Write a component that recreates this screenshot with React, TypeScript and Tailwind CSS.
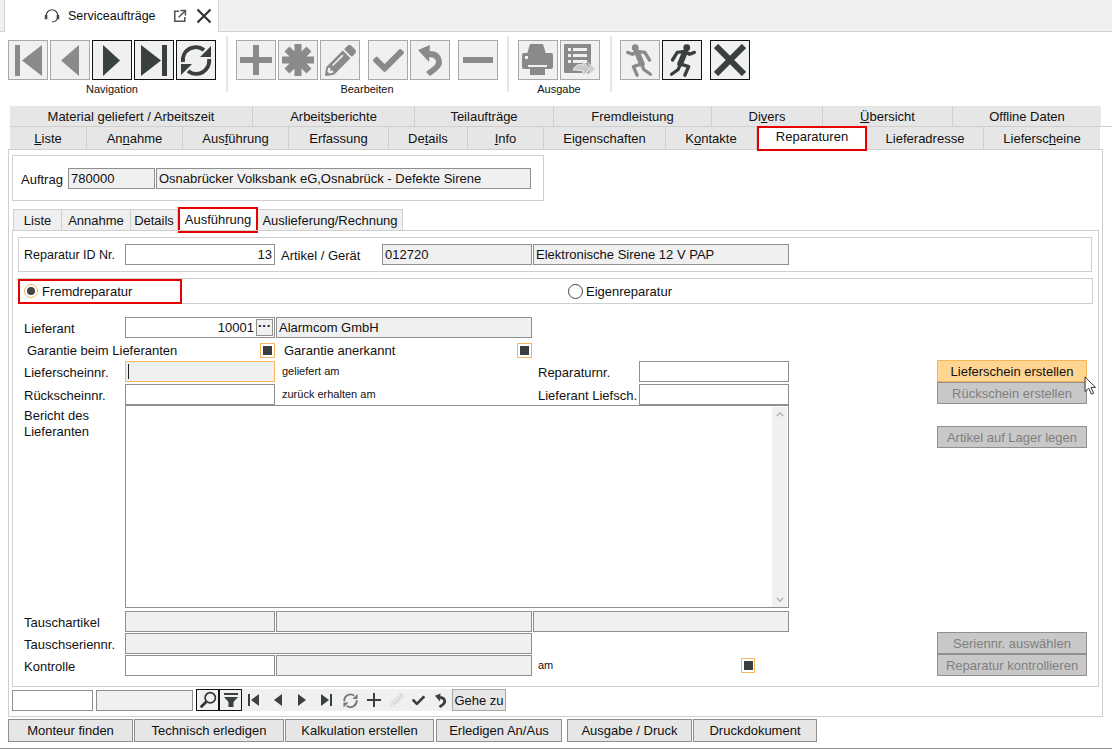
import type { ReactNode } from "react"
import { FaCheck, FaPencilAlt } from "react-icons/fa"

const DARK = "#3a3f3f"
const GREY = "#8a8a8a"

function First({ c }: { c: string }) {
  return (
    <svg viewBox="0 0 32 32" className="w-[32px] h-[32px]" fill={c}>
      <rect x="3" y="1" width="5" height="31" />
      <path d="M10 16.5 L30 1 V32 Z" />
    </svg>
  )
}
function Prev({ c }: { c: string }) {
  return (
    <svg viewBox="0 0 32 32" className="w-[32px] h-[32px]" fill={c}>
      <path d="M7 16.5 L25 1 V32 Z" />
    </svg>
  )
}
function Next({ c }: { c: string }) {
  return (
    <svg viewBox="0 0 32 32" className="w-[32px] h-[32px]" fill={c}>
      <path d="M24 16.5 L7 1 V32 Z" />
    </svg>
  )
}
function Last({ c }: { c: string }) {
  return (
    <svg viewBox="0 0 32 32" className="w-[32px] h-[32px]" fill={c}>
      <path d="M23 16.5 L3 1 V32 Z" />
      <rect x="24" y="1" width="5" height="31" />
    </svg>
  )
}
function Plus({ c }: { c: string }) {
  return (
    <svg viewBox="0 0 32 32" className="w-[32px] h-[32px]" fill={c}>
      <path d="M13 1 H19 V13 H32 V19 H19 V31 H13 V19 H0 V13 H13 Z" />
    </svg>
  )
}
function Star({ c }: { c: string }) {
  return (
    <svg viewBox="0 0 32 32" className="w-[32px] h-[32px]" fill="none" stroke={c} strokeWidth="7">
      <path d="M16 0 V32 M0 16 H32 M5 5 L27 27 M27 5 L5 27" />
    </svg>
  )
}
function Minus({ c }: { c: string }) {
  return (
    <svg viewBox="0 0 32 32" className="w-[32px] h-[32px]" fill={c}>
      <rect x="1" y="13" width="30" height="6" />
    </svg>
  )
}
function Undo({ c, size = "w-[32px] h-[32px]" }: { c: string; size?: string }) {
  return (
    <svg viewBox="0 0 32 32" className={size} fill={c}>
      <path d="M4 6 L16 1 L15 18 Z" />
      <path d="M14 7 C24 6 28 12 28 19 C28 23 22 28 16 32 L12 28 C17 24 22 21 22 18 C22 14 18 13 14 13 Z" />
    </svg>
  )
}
function Cross({ c }: { c: string }) {
  return (
    <svg viewBox="0 0 32 32" className="w-[32px] h-[32px]" fill="none" stroke={c} strokeWidth="6">
      <path d="M2 2 L30 30 M30 2 L2 30" />
    </svg>
  )
}
function Refresh({ c, size = "w-[32px] h-[32px]" }: { c: string; size?: string }) {
  return (
    <svg viewBox="0 0 32 32" className={size}>
      <g fill="none" stroke={c} strokeWidth="4">
        <path d="M3 18 A13 13 0 0 1 24 6" />
        <path d="M29 15 A13 13 0 0 1 8 27" />
      </g>
      <path d="M20 13 L31 13 L31 2 Z M12 20 L1 20 L1 31 Z" fill={c} />
    </svg>
  )
}
function Printer({ c }: { c: string }) {
  return (
    <svg viewBox="0 0 32 32" className="w-[32px] h-[32px]" fill={c}>
      <path d="M8 0 H21 L24 10 H5 Z" />
      <rect x="0" y="9" width="31" height="16" rx="2" />
      <rect x="8" y="25" width="15" height="6" />
      <rect x="3" y="12" width="3" height="3" fill="#f0f0f0" />
      <rect x="6" y="21" width="19" height="2" fill="#f0f0f0" />
    </svg>
  )
}
function Runner({ c, flip }: { c: string; flip?: boolean }) {
  return (
    <svg viewBox="0 0 40 40" className={`w-[38px] h-[38px] ${flip ? "-scale-x-100" : ""}`} fill="none" stroke={c} strokeWidth="3.5" strokeLinejoin="round" strokeLinecap="round">
      <circle cx="25" cy="7" r="3.6" fill={c} stroke="none" />
      <path d="M23 12 L18 24" strokeWidth="6" />
      <path d="M23 11 L28 14 L33 12" />
      <path d="M23 11 L15 12 L10 20" />
      <path d="M18 24 L27 27 L23 36" />
      <path d="M18 25 L16 30 L9 35" />
    </svg>
  )
}
function ReportSend() {
  return (
    <svg viewBox="0 0 34 34" className="w-[34px] h-[34px]">
      <rect x="1" y="1" width="27" height="29" rx="1" fill={GREY} />
      <g fill="#f0f0f0">
        <rect x="5" y="5" width="3" height="3" />
        <rect x="10" y="5" width="14" height="3" />
        <rect x="5" y="11" width="3" height="3" />
        <rect x="10" y="11" width="14" height="3" />
        <rect x="5" y="17" width="3" height="3" />
        <rect x="10" y="17" width="14" height="3" />
      </g>
      <path d="M10 27 C13 21 17 21 20 22 V18 L27 26 L20 33 V28 C16 27 13 27 10 27 Z" fill="#c8c8c8" stroke="#f0f0f0" />
      <path d="M24 18 L32 26 L24 33 L27 26 Z" fill="#cfcfcf" />
    </svg>
  )
}

function ToolBtn({ on, children, className }: { on?: boolean; children: ReactNode; className?: string }) {
  return (
    <div
      className={`w-[40px] h-[40px] bg-[#f0f0f0] flex items-center justify-center border ${on ? "border-[#111]" : "border-[#a8a8a8]"} ${className ?? ""}`}
    >
      {children}
    </div>
  )
}

function ToolGroup({ label, className, children }: { label: string; className: string; children: ReactNode }) {
  return (
    <div className={`flex flex-col items-start ${className}`}>
      <div className="flex gap-[2px]">{children}</div>
      <div className="w-full text-center text-[11px] leading-[12px] mt-[3px] text-[#111]">{label}</div>
    </div>
  )
}

const Sep = ({ className }: { className: string }) => <div className={`w-[2px] h-[56px] -mt-[4px] bg-[#e6e6e6] ${className}`} />

type Tab = { t: ReactNode; w: string; active?: boolean }

const u = (s: string) => <span className="underline underline-offset-1">{s}</span>

const topTabs: Tab[] = [
  { t: "Material geliefert / Arbeitszeit", w: "w-[243px]" },
  { t: <>Arbeit{u("s")}berichte</>, w: "w-[162px]" },
  { t: "Teilaufträge", w: "w-[139px]" },
  { t: "Fremdleistung", w: "w-[158px]" },
  { t: <>Di{u("v")}ers</>, w: "w-[111px]" },
  { t: <>{u("Ü")}bersicht</>, w: "w-[130px]" },
  { t: "Offline Daten", w: "w-[148px]" },
]

const mainTabs: Tab[] = [
  { t: <>{u("L")}iste</>, w: "w-[77px]" },
  { t: <>An{u("n")}ahme</>, w: "w-[96px]" },
  { t: <>Aus{u("f")}ührung</>, w: "w-[106px]" },
  { t: "Erfassung", w: "w-[100px]" },
  { t: <>De{u("t")}ails</>, w: "w-[79px]" },
  { t: <>{u("I")}nfo</>, w: "w-[76px]" },
  { t: <>Ei{u("g")}enschaften</>, w: "w-[122px]" },
  { t: <>K{u("o")}ntakte</>, w: "w-[91px]" },
  { t: "Reparaturen", w: "w-[110px]", active: true },
  { t: "Lieferadresse", w: "w-[117px]" },
  { t: <>Liefersc{u("h")}eine</>, w: "w-[116px]" },
]

function TabRow({ tabs, className }: { tabs: Tab[]; className: string }) {
  return (
    <div className={`flex ml-[10px] ${className}`}>
      {tabs.map((tab, i) =>
        tab.active ? (
          <div
            key={i}
            className={`${tab.w} h-[25px] -mt-[1px] -mb-[3px] relative bg-white border-2 border-[#e60000] flex items-start pt-[1px] justify-center`}
          >
            {tab.t}
          </div>
        ) : (
          <div
            key={i}
            className={`${tab.w} flex items-center justify-center bg-[#e6e6e6] border-r border-[#cfcfcf] last:border-r-0`}
          >
            {tab.t}
          </div>
        ),
      )}
    </div>
  )
}

function Input({
  w,
  grey,
  focus,
  right,
  children,
  className,
}: {
  w: string
  grey?: boolean
  focus?: boolean
  right?: boolean
  children?: ReactNode
  className?: string
}) {
  return (
    <div
      className={`${w} h-[21px] shrink-0 border ${focus ? "border-[#f7b65c]" : "border-[#8f8f8f]"} ${grey ? "bg-[#f0f0f0]" : "bg-white"} ${right ? "justify-end" : ""} flex items-center px-[2px] whitespace-nowrap ${className ?? ""}`}
    >
      {children}
    </div>
  )
}

function Check({ small }: { small?: boolean }) {
  return (
    <div className={`${small ? "w-[14px]" : "w-[15px]"} h-[15px] shrink-0 border border-[#f7b65c] flex items-center justify-center bg-white`}>
      <div className="w-[9px] h-[9px] bg-[#3a3f3f]" />
    </div>
  )
}

function Label({ w, children, className }: { w: string; children: ReactNode; className?: string }) {
  return <div className={`${w} shrink-0 whitespace-nowrap ${className ?? ""}`}>{children}</div>
}

function SideBtn({ children, hot, className }: { children: ReactNode; hot?: boolean; className?: string }) {
  return (
    <div
      className={`w-[150px] h-[22px] flex items-center justify-center border ${hot ? "bg-[#ffd591] border-[#f7b65c] text-[#111]" : "bg-[#c8c8c8] border-[#8f8f8f] text-[#7f7f7f]"} ${className ?? ""}`}
    >
      {children}
    </div>
  )
}

function BottomBtn({ w, children, className }: { w: string; children: ReactNode; className?: string }) {
  return (
    <div className={`${w} h-[23px] flex items-center justify-center bg-[#e6e6e6] border border-[#8f8f8f] ${className ?? ""}`}>
      {children}
    </div>
  )
}

function SubTab({ w, children, active }: { w: string; children: ReactNode; active?: boolean }) {
  if (active) {
    return (
      <div className={`${w} h-[26px] -mt-[2px] -mb-[3px] relative bg-white border-2 border-[#e60000] flex items-start pt-[3px] justify-center`}>
        {children}
      </div>
    )
  }
  return <div className={`${w} flex items-center justify-center bg-[#efefef] border-t border-r border-[#d0d0d0] first:border-l whitespace-nowrap`}>{children}</div>
}

function NavIcon({ d, c = DARK }: { d: string; c?: string }) {
  return (
    <svg viewBox="0 0 16 16" className="w-[16px] h-[16px] shrink-0" fill={c}>
      <path d={d} />
    </svg>
  )
}

export default function App() {
  return (
    <div className="w-[1112px] h-[749px] relative overflow-hidden bg-white text-[13px] leading-[15px] text-[#111] font-['Liberation_Sans',Arial,sans-serif]">
      {/* Fenster-Tab */}
      <div className="h-[32px] bg-[#f0f0f0] border-b border-[#d2d2d2] flex">
        <div className="w-[215px] ml-[4px] h-[32px] bg-white border-l border-r border-[#d2d2d2] flex items-center">
          <svg viewBox="0 0 18 18" className="w-[16px] h-[16px] ml-[39px]" fill="none" stroke="#444" strokeWidth="1.3">
            <path d="M2.5 11 V8.5 A6.5 6.5 0 0 1 15.5 8.5 V11" />
            <rect x="1.5" y="8.5" width="1.6" height="3.5" fill="#444" />
            <rect x="14.9" y="8.5" width="1.6" height="3.5" fill="#444" />
            <path d="M15 12 C14 15 12 15.6 9 15.6" />
          </svg>
          <span className="ml-[8px] text-[12.5px]">Serviceaufträge</span>
          <svg viewBox="0 0 16 16" className="w-[14px] h-[14px] ml-[17px]" fill="none" stroke="#555" strokeWidth="1.8">
            <path d="M7 2.5 H2 V14 H13.5 V9" />
            <path d="M6.5 9.5 L13.5 2.5 M8.5 1.8 H14.2 V7.5" />
          </svg>
          <svg viewBox="0 0 16 16" className="w-[16px] h-[16px] ml-[9px]" fill="none" stroke="#333" strokeWidth="2.2">
            <path d="M1.5 1.5 L14.5 14.5 M14.5 1.5 L1.5 14.5" />
          </svg>
        </div>
      </div>

      {/* Werkzeugleiste */}
      <div className="flex items-start h-[74px] pt-[8px] pl-[8px]">
        <ToolGroup label="Navigation" className="w-[208px]">
          <ToolBtn><First c={GREY} /></ToolBtn>
          <ToolBtn><Prev c={GREY} /></ToolBtn>
          <ToolBtn on><Next c={DARK} /></ToolBtn>
          <ToolBtn on><Last c={DARK} /></ToolBtn>
          <ToolBtn on><Refresh c={DARK} /></ToolBtn>
        </ToolGroup>
        <Sep className="ml-[10px]" />
        <ToolGroup label="Bearbeiten" className="w-[262px] ml-[8px]">
          <ToolBtn><Plus c={GREY} /></ToolBtn>
          <ToolBtn><Star c={GREY} /></ToolBtn>
          <ToolBtn><FaPencilAlt size={31} color={GREY} /></ToolBtn>
          <ToolBtn className="ml-[6px]"><FaCheck size={31} color={GREY} /></ToolBtn>
          <ToolBtn><Undo c={GREY} /></ToolBtn>
          <ToolBtn className="ml-[6px]"><Minus c={GREY} /></ToolBtn>
        </ToolGroup>
        <Sep className="ml-[9px]" />
        <ToolGroup label="Ausgabe" className="w-[82px] ml-[9px]">
          <ToolBtn><Printer c={GREY} /></ToolBtn>
          <ToolBtn><ReportSend /></ToolBtn>
        </ToolGroup>
        <Sep className="ml-[10px]" />
        <div className="flex ml-[8px]">
          <ToolBtn><Runner c={GREY} flip /></ToolBtn>
          <ToolBtn on className="ml-[2px]"><Runner c={DARK} /></ToolBtn>
          <ToolBtn on className="ml-[8px]"><Cross c={DARK} /></ToolBtn>
        </div>
      </div>

      {/* Haupt-Reiter */}
      <TabRow tabs={topTabs} className="h-[21px] border-b border-[#cfcfcf]" />
      <TabRow tabs={mainTabs} className="h-[22px]" />

      {/* Hauptfeld */}
      <div className="ml-[8px] w-[1095px] h-[568px] border border-[#cfcfcf] pl-[3px] pt-[5px]">
        <div className="w-[532px] h-[46px] border border-[#cfcfcf] flex items-center pl-[8px]">
          <span className="w-[47px] shrink-0 pt-[2px]">Auftrag</span>
          <Input w="w-[87px]" grey>780000</Input>
          <Input w="w-[375px]" grey className="ml-[1px]">Osnabrücker Volksbank eG,Osnabrück - Defekte Sirene</Input>
        </div>

        {/* Unter-Reiter */}
        <div className="flex h-[21px] mt-[8px] ml-[1px] relative">
          <SubTab w="w-[49px]">Liste</SubTab>
          <SubTab w="w-[69px]">Annahme</SubTab>
          <SubTab w="w-[47px]">Details</SubTab>
          <SubTab w="w-[80px]" active>Ausführung</SubTab>
          <SubTab w="w-[145px]">Auslieferung/Rechnung</SubTab>
        </div>

        <div className="w-[1087px] h-[457px] border border-[#cfcfcf] pl-[5px] pt-[6px] relative">
          <div className="w-[1074px] h-[35px] border border-[#cfcfcf] flex items-center pl-[5px]">
            <Label w="w-[101px]" className="pt-[2px] text-[12.5px]">Reparatur ID Nr.</Label>
            <Input w="w-[150px]" right>13</Input>
            <Label w="w-[107px]" className="pl-[6px] pt-[2px]">Artikel / Gerät</Label>
            <Input w="w-[150px]" grey>012720</Input>
            <Input w="w-[256px]" grey className="ml-[1px]">Elektronische Sirene 12 V PAP</Input>
          </div>

          <div className="w-[1075px] h-[26px] mt-[6px] border border-[#cfcfcf] flex items-center relative">
            <div className="absolute -left-[1px] top-[0px] w-[164px] h-[25px] border-2 border-[#e60000]" />
            <div className="w-[14px] h-[14px] ml-[5px] rounded-full border border-[#f7b65c] flex items-center justify-center bg-white">
              <div className="w-[8px] h-[8px] rounded-full bg-[#444]" />
            </div>
            <span className="ml-[4px] w-[526px]">Fremdreparatur</span>
            <div className="w-[15px] h-[15px] rounded-full border border-[#444] bg-white" />
            <span className="ml-[3px]">Eigenreparatur</span>
          </div>

          <div className="flex">
            <div className="w-[772px] shrink-0 pl-[6px]">
              <div className="flex items-center mt-[13px]">
                <Label w="w-[101px]" className="pt-[2px]">Lieferant</Label>
                <Input w="w-[150px]" right className="pr-[1px]">
                  <span className="mr-[2px]">10001</span>
                  <span className="w-[17px] h-[17px] border border-[#8f8f8f] bg-[#f0f0f0] flex items-center justify-center font-bold leading-[8px] pb-[3px]">···</span>
                </Input>
                <Input w="w-[256px]" grey className="ml-[1px]">Alarmcom GmbH</Input>
              </div>
              <div className="flex items-center mt-[4px] h-[16px]">
                <Label w="w-[236px]" className="pl-[3px]">Garantie beim Lieferanten</Label>
                <Check />
                <Label w="w-[242px]" className="pl-[9px]">Garantie anerkannt</Label>
                <Check />
              </div>
              <div className="flex items-center mt-[3px]">
                <Label w="w-[101px]" className="pt-[2px]">Lieferscheinnr.</Label>
                <Input w="w-[150px]" grey focus>
                  <span className="w-[1px] h-[15px] bg-[#222]" />
                </Input>
                <Label w="w-[263px]" className="pl-[7px] text-[11px] leading-[13px]">geliefert am</Label>
                <Label w="w-[101px]" className="pt-[2px]">Reparaturnr.</Label>
                <Input w="w-[150px]" />
              </div>
              <div className="flex items-center mt-[2px]">
                <Label w="w-[101px]" className="pt-[2px]">Rückscheinnr.</Label>
                <Input w="w-[150px]" />
                <Label w="w-[263px]" className="pl-[7px] text-[11px] leading-[13px]">zurück erhalten am</Label>
                <Label w="w-[101px]" className="pt-[2px]">Lieferant Liefsch.</Label>
                <Input w="w-[150px]" />
              </div>
              <div className="flex">
                <Label w="w-[101px]" className="pt-[3px] leading-[16px]">Bericht des<br />Lieferanten</Label>
                <div className="w-[664px] h-[203px] border border-[#8f8f8f] flex justify-end p-[1px] pb-0">
                  <div className="w-[15px] h-full bg-[#f0f0f0] flex flex-col justify-between items-center py-[5px]">
                    <svg viewBox="0 0 10 6" className="w-[8px] h-[5px]" fill="none" stroke="#a8a8a8" strokeWidth="1.5"><path d="M1 5 L5 1 L9 5" /></svg>
                    <svg viewBox="0 0 10 6" className="w-[8px] h-[5px]" fill="none" stroke="#a8a8a8" strokeWidth="1.5"><path d="M1 1 L5 5 L9 1" /></svg>
                  </div>
                </div>
              </div>
              <div className="flex items-center mt-[3px]">
                <Label w="w-[101px]" className="pt-[2px]">Tauschartikel</Label>
                <Input w="w-[150px]" grey />
                <Input w="w-[256px]" grey className="ml-[1px]" />
                <Input w="w-[256px]" grey className="ml-[1px]" />
              </div>
              <div className="flex items-center mt-[1px]">
                <Label w="w-[101px]" className="pt-[2px]">Tauschseriennr.</Label>
                <Input w="w-[407px]" grey />
              </div>
              <div className="flex items-center mt-[1px]">
                <Label w="w-[101px]" className="pt-[2px]">Kontrolle</Label>
                <Input w="w-[150px]" />
                <Input w="w-[256px]" grey className="ml-[1px]" />
                <Label w="w-[209px]" className="pl-[6px] text-[11px] leading-[13px]">am</Label>
                <Check small />
              </div>
            </div>

            <div className="flex flex-col ml-[147px] pt-[56px]">
              <SideBtn hot>Lieferschein erstellen</SideBtn>
              <SideBtn>Rückschein erstellen</SideBtn>
              <SideBtn className="mt-[22px]">Artikel auf Lager legen</SideBtn>
              <SideBtn className="mt-[184px]">Seriennr. auswählen</SideBtn>
              <SideBtn>Reparatur kontrollieren</SideBtn>
            </div>
          </div>
        </div>

        {/* Suchleiste */}
        <div className="flex items-center mt-[2px] h-[22px]">
          <Input w="w-[81px]" />
          <Input w="w-[97px]" grey className="ml-[3px]" />
          <div className="w-[23px] h-[22px] ml-[3px] border border-[#111] bg-[#f0f0f0] flex items-center justify-center">
            <svg viewBox="0 0 16 16" className="w-[18px] h-[18px]" fill="none" stroke="#333" strokeWidth="1.5">
              <circle cx="10" cy="6" r="4.6" />
              <path d="M6.5 9.5 L1.5 14.5" strokeWidth="2.4" />
            </svg>
          </div>
          <div className="w-[23px] h-[22px] border border-[#111] bg-[#f0f0f0] flex items-center justify-center">
            <svg viewBox="0 0 16 16" className="w-[16px] h-[16px]" fill="#3a3f3f">
              <rect x="1" y="1" width="14" height="2" />
              <path d="M1 5 H15 L10.5 10 V15 H5.5 V10 Z" />
            </svg>
          </div>
          <div className="flex items-center justify-between w-[210px] h-[22px] bg-[#f0f0f0] px-[4px]">
            <NavIcon d="M2 2 H4 V14 H2 Z M5 8 L13 2 V14 Z" />
            <NavIcon d="M4 8 L12 2 V14 Z" />
            <NavIcon d="M12 8 L4 2 V14 Z" />
            <NavIcon d="M11 8 L3 2 V14 Z M12 2 H14 V14 H12 Z" />
            <Refresh c="#777" size="w-[15px] h-[15px]" />
            <NavIcon d="M7 1 H9 V7 H15 V9 H9 V15 H7 V9 H1 V7 H7 Z" />
            <FaPencilAlt size={14} color="#dcdcdc" />
            <FaCheck size={13} color={DARK} />
            <Undo c={DARK} size="w-[15px] h-[15px]" />
          </div>
          <div className="w-[54px] h-[22px] border border-[#a8a8a8] bg-[#e6e6e6] flex items-center justify-center whitespace-nowrap">Gehe zu</div>
        </div>
      </div>

      {/* Untere Knöpfe */}
      <div className="flex ml-[8px] mt-[2px]">
        <BottomBtn w="w-[125px]">Monteur finden</BottomBtn>
        <BottomBtn w="w-[150px]" className="ml-[1px]">Technisch erledigen</BottomBtn>
        <BottomBtn w="w-[149px]" className="ml-[1px]">Kalkulation erstellen</BottomBtn>
        <BottomBtn w="w-[126px]" className="ml-[2px]">Erledigen An/Aus</BottomBtn>
        <BottomBtn w="w-[125px]" className="ml-[5px]">Ausgabe / Druck</BottomBtn>
        <BottomBtn w="w-[124px]" className="ml-[1px]">Druckdokument</BottomBtn>
      </div>
      <div className="absolute left-0 right-0 bottom-0 h-[1px] bg-[#8f8f8f]" />

      {/* Mauszeiger */}
      <svg viewBox="0 0 14 22" className="absolute left-[1084px] top-[376px] w-[13px] h-[20px]" fill="#fff" stroke="#222" strokeWidth="1">
        <path d="M1 1 V17 L5 13.5 L8 20 L10.5 19 L7.5 12.5 H12.5 Z" />
      </svg>
    </div>
  )
}
